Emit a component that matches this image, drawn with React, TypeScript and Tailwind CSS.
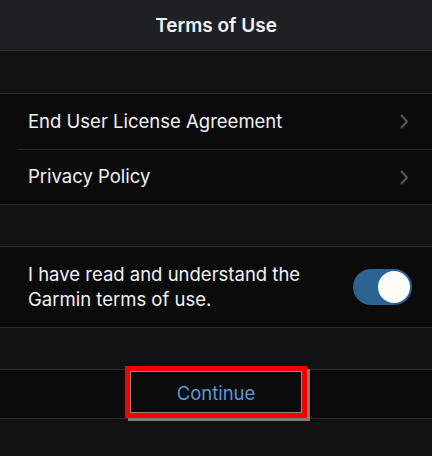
import React from 'react';

function Chevron() {
  return (
    <svg width="9" height="15" viewBox="0 0 9 15" fill="none" className="shrink-0">
      <path d="M1.5 1.5 L7 7.5 L1.5 13.5" stroke="#56575b" strokeWidth="2" strokeLinecap="round" strokeLinejoin="round" />
    </svg>
  );
}

export default function App() {
  return (
    <div
      className="w-[432px] h-[456px] bg-[#121214] text-[#f2f2f4] overflow-hidden flex flex-col"
      style={{ fontFamily: 'Inter, "Noto Sans", sans-serif' }}
    >
      {/* Header */}
      <div className="h-[51px] shrink-0 bg-[#1f2024] border-b border-[#2c2d31] flex items-center justify-center pt-[3px]">
        <span className="text-[19px] font-semibold">Terms of Use</span>
      </div>

      <div className="h-[42px] shrink-0" />

      {/* Links */}
      <div className="bg-[#0b0b0c] border-y border-[#2a2a2d]">
        <div className="h-[55px] flex items-center justify-between pl-[28px] pr-[23px]">
          <span className="text-[18.5px]">End User License Agreement</span>
          <Chevron />
        </div>
        <div className="ml-[17px] border-t border-[#27272a]" />
        <div className="h-[54px] flex items-center justify-between pl-[28px] pr-[23px]">
          <span className="text-[18.5px]">Privacy Policy</span>
          <Chevron />
        </div>
      </div>

      <div className="h-[41px] shrink-0" />

      {/* Agreement toggle */}
      <div className="h-[82px] shrink-0 bg-[#0b0b0c] border-y border-[#2a2a2d] flex items-center justify-between pl-[28px] pr-[20px]">
        <p className="text-[18.5px] leading-[25px]">
          I have read and understand the
          <br />
          Garmin terms of use.
        </p>
        <div className="w-[59px] h-[36px] rounded-full bg-[#2d6392] flex items-center justify-end pr-[2px]">
          <div className="w-[32px] h-[32px] rounded-full bg-[#fbfbf8]" />
        </div>
      </div>

      <div className="h-[41px] shrink-0" />

      {/* Continue */}
      <div className="h-[50px] shrink-0 bg-[#0b0b0c] border-y border-[#2a2a2d] flex items-center justify-center">
        <div className="relative -translate-y-[2px] w-[182px] h-[52px] border-[5px] border-[#f30000] shadow-[3px_3px_0_#7d7d7d] flex items-center justify-center">
          <div className="absolute inset-0 border border-[#8a8a8a]" />
          <span className="translate-y-[2px] text-[18.5px] text-[#5b9ad8]">Continue</span>
        </div>
      </div>
    </div>
  );
}
